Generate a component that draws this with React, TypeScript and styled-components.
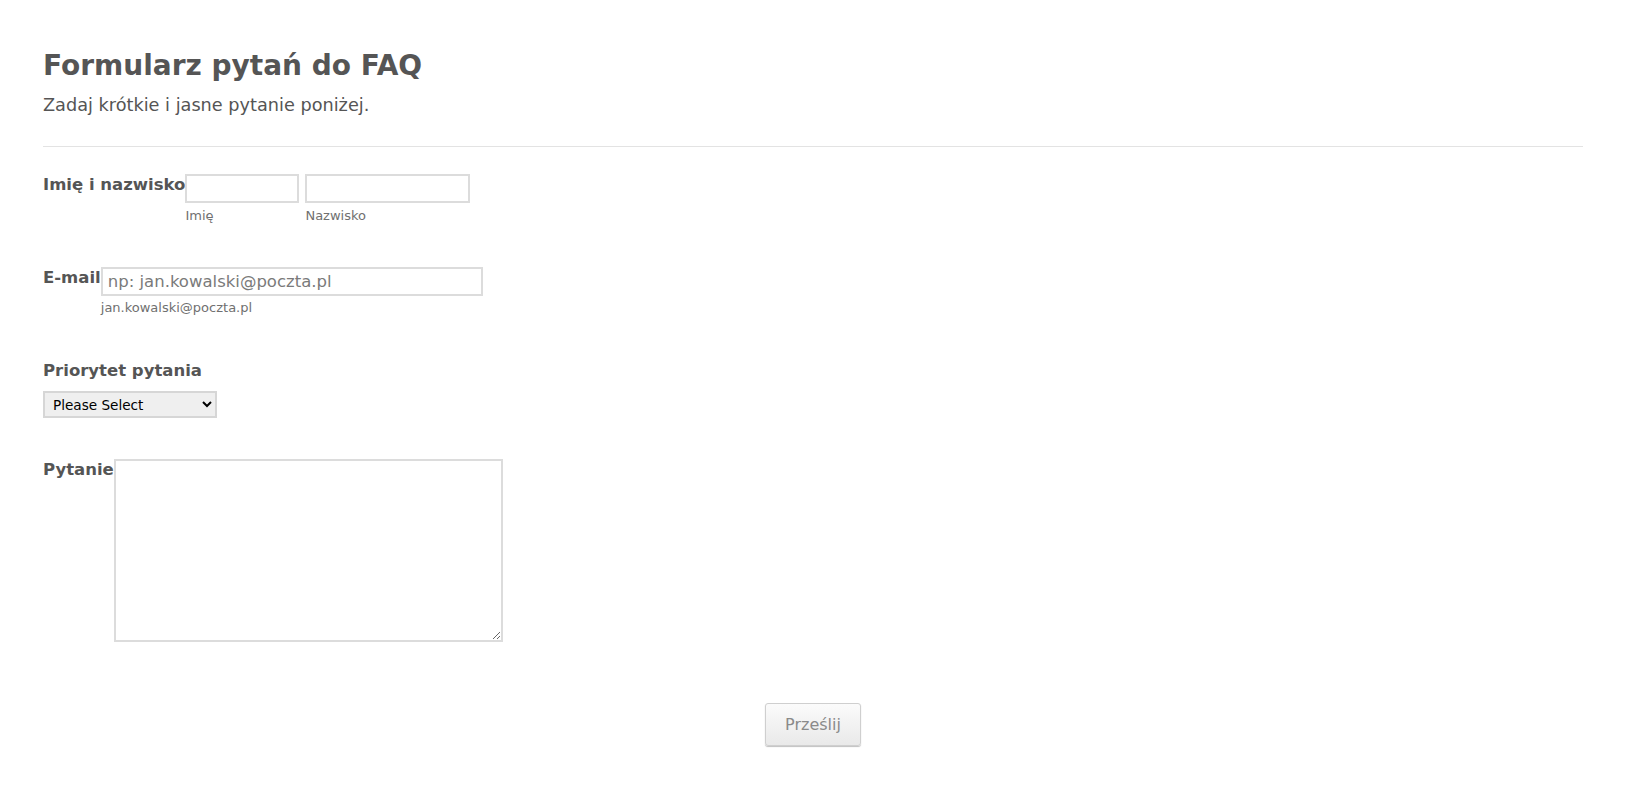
import React, { useState } from "react";
import styled, { createGlobalStyle } from "styled-components";

const GlobalStyle = createGlobalStyle`
    html, body {
        margin: 0;
        padding: 0;
        background: #fff;
    }
    body {
        font-family: "DejaVu Sans", Verdana, sans-serif;
        color: #555;
    }
`;

const Page = styled.div`
    padding: 49px 45px 40px 43px;
`;

const Header = styled.div`
    padding-bottom: 30px;
    border-bottom: 1px solid #e3e3e3;
`;

const Title = styled.h1`
    margin: 0;
    font-size: 28px;
    font-weight: bold;
    line-height: 33px;
    color: #555;
`;

const Subtitle = styled.div`
    margin-top: 13px;
    font-size: 17.7px;
    line-height: 21px;
    color: #555;
`;

const Fields = styled.div`
    display: flex;
    flex-direction: column;
    padding-top: 27px;
`;

const Row = styled.div<{ $stacked?: boolean; $space?: number }>`
    display: flex;
    flex-direction: ${(p) => (p.$stacked ? "column" : "row")};
    align-items: flex-start;
    margin-bottom: ${(p) => p.$space ?? 44}px;
`;

const Label = styled.label`
    font-size: 16.5px;
    font-weight: bold;
    line-height: 22px;
    color: #555;
    white-space: nowrap;
`;

const Group = styled.div`
    display: flex;
    gap: 6px;
`;

const Field = styled.div`
    display: flex;
    flex-direction: column;
`;

const Input = styled.input<{ $width: number }>`
    box-sizing: border-box;
    width: ${(p) => p.$width}px;
    height: 29px;
    padding: 0 5px;
    border: 2px solid #dcdcdc;
    font-family: "DejaVu Sans", Verdana, sans-serif;
    font-size: 16.5px;
    color: #555;
    outline: none;

    &::placeholder {
        color: #7a7a7a;
    }
`;

const SubLabel = styled.span<{ $gap: number }>`
    margin-top: ${(p) => p.$gap}px;
    font-size: 13px;
    line-height: 15px;
    color: #707070;
`;

const Select = styled.select`
    box-sizing: border-box;
    width: 174px;
    height: 27px;
    margin-top: 9px;
    padding: 0 4px;
    background: #efefef;
    border: 2px solid #d6d6d6;
    border-radius: 0;
    font-family: "DejaVu Sans", Verdana, sans-serif;
    font-size: 13.6px;
    color: #000;
`;

const TextArea = styled.textarea`
    box-sizing: border-box;
    width: 389px;
    height: 183px;
    border: 2px solid #dcdcdc;
    font-family: "DejaVu Sans", Verdana, sans-serif;
    font-size: 14px;
    outline: none;
`;

const Actions = styled.div`
    display: flex;
    justify-content: center;
    padding-top: 17px;
`;

const SubmitButton = styled.button`
    box-sizing: border-box;
    height: 43px;
    padding: 0 19px;
    border: 1px solid #cfcfcf;
    border-radius: 3px;
    background: linear-gradient(#fbfbfb, #e9e9e9);
    box-shadow: 0 1px 1px rgba(0, 0, 0, 0.25);
    font-family: "DejaVu Sans", Verdana, sans-serif;
    font-size: 16px;
    color: #8a8a8a;
    cursor: pointer;
`;

const App = () => {
    const [first, setFirst] = useState("");
    const [last, setLast] = useState("");
    const [email, setEmail] = useState("");
    const [priority, setPriority] = useState("");
    const [question, setQuestion] = useState("");

    const onSubmit = (e: React.FormEvent<HTMLFormElement>) => {
        e.preventDefault();
    };

    return (
        <Page>
            <GlobalStyle />
            <Header>
                <Title>Formularz pytań do FAQ</Title>
                <Subtitle>Zadaj krótkie i jasne pytanie poniżej.</Subtitle>
            </Header>
            <form onSubmit={onSubmit}>
                <Fields>
                    <Row>
                        <Label>Imię i nazwisko</Label>
                        <Group>
                            <Field>
                                <Input $width={114} value={first} onChange={(e) => setFirst(e.target.value)} />
                                <SubLabel $gap={5}>Imię</SubLabel>
                            </Field>
                            <Field>
                                <Input $width={165} value={last} onChange={(e) => setLast(e.target.value)} />
                                <SubLabel $gap={5}>Nazwisko</SubLabel>
                            </Field>
                        </Group>
                    </Row>
                    <Row $space={45}>
                        <Label>E-mail</Label>
                        <Field>
                            <Input
                                $width={382}
                                type="email"
                                placeholder="np: jan.kowalski@poczta.pl"
                                value={email}
                                onChange={(e) => setEmail(e.target.value)}
                            />
                            <SubLabel $gap={4}>jan.kowalski@poczta.pl</SubLabel>
                        </Field>
                    </Row>
                    <Row $stacked $space={41}>
                        <Label>Priorytet pytania</Label>
                        <Select value={priority} onChange={(e) => setPriority(e.target.value)}>
                            <option value="">Please Select</option>
                            <option value="low">Niski</option>
                            <option value="medium">Średni</option>
                            <option value="high">Wysoki</option>
                        </Select>
                    </Row>
                    <Row $space={44}>
                        <Label>Pytanie</Label>
                        <TextArea value={question} onChange={(e) => setQuestion(e.target.value)} />
                    </Row>
                </Fields>
                <Actions>
                    <SubmitButton type="submit">Prześlij</SubmitButton>
                </Actions>
            </form>
        </Page>
    );
};

export default App;
